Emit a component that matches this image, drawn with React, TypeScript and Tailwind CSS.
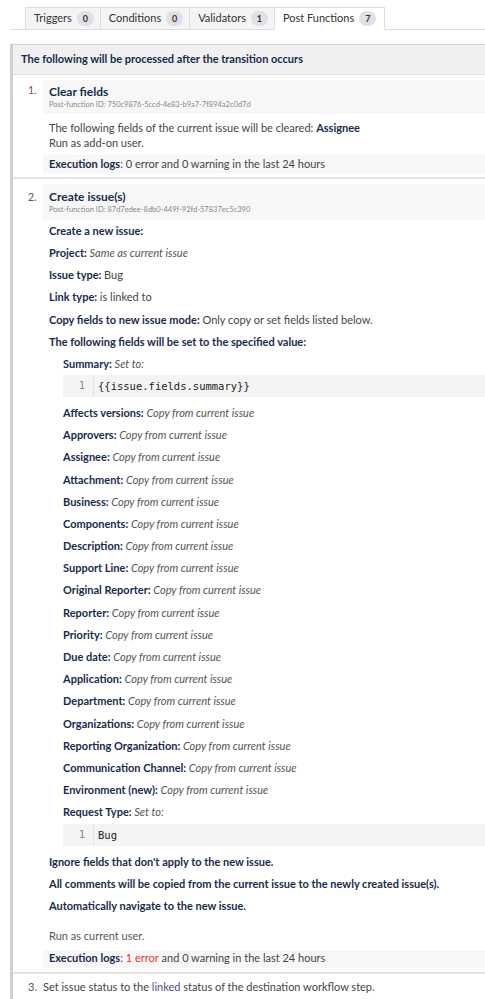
import React from 'react';

const tabs = [
  { label: 'Triggers', count: 0 },
  { label: 'Conditions', count: 0 },
  { label: 'Validators', count: 1 },
  { label: 'Post Functions', count: 7 },
];

const copied = [
  'Affects versions',
  'Approvers',
  'Assignee',
  'Attachment',
  'Business',
  'Components',
  'Description',
  'Support Line',
  'Original Reporter',
  'Reporter',
  'Priority',
  'Due date',
  'Application',
  'Department',
  'Organizations',
  'Reporting Organization',
  'Communication Channel',
  'Environment (new)',
];

const Code = ({ text }: { text: string }) => (
  <div className="flex h-[22px] items-center bg-[#f4f4f4] font-['DejaVu_Sans_Mono',monospace] text-[10.5px] text-[#222]">
    <span className="w-[30px] pr-[8px] text-right text-[#888]">1</span>
    <span className="h-full border-l border-[#e2e2e2] pl-[4px] leading-[22px]">{text}</span>
  </div>
);

const Line = ({ label, value, italic }: { label: string; value: string; italic?: boolean }) => (
  <div className="h-[22.2px] leading-[22px]">
    <span className="font-bold text-[#172b4d]">{label}: </span>
    <span className={italic ? 'italic text-[#555]' : 'text-[#444]'}>{value}</span>
  </div>
);

export default function App() {
  return (
    <div className="min-h-screen bg-white font-['Lato',sans-serif] text-[11px] text-[#333]">
      <div className="ml-[10px] flex border-b border-[#ddd] pt-[7px] pl-[15px]">
        {tabs.map((t, i) => {
          const active = i === tabs.length - 1;
          return (
            <div
              key={t.label}
              className={`-mb-px flex h-[23px] items-center gap-[5px] border border-[#ddd] pl-[8px] pr-[6px] text-[11px] ${
                active ? 'border-b-white bg-white pr-[8px]' : 'bg-[#f4f4f4]'
              } ${i > 0 ? '-ml-px' : ''}`}
            >
              <span className="text-[#333]">{t.label}</span>
              <span className="flex h-[15px] min-w-[17px] items-center justify-center rounded-full bg-[#e0e1e6] px-[5px] text-[9px] font-bold text-[#333]">
                {t.count}
              </span>
            </div>
          );
        })}
      </div>

      <div className="ml-[10px] mt-[14px] border-l-[3px] border-t border-[#d0d0d0]">
        <div className="flex h-[30px] items-center border-b border-[#ddd] bg-[#f0f0f0] pl-[8px] text-[11px] font-bold text-[#172b4d]">
          The following will be processed after the transition occurs
        </div>

        {/* 1 */}
        <div className="flex pt-[5px] pb-[4px]">
          <div className="w-[30px] pl-[15px] pt-[3px] text-[10.5px] text-[#8a3f6f]">1.</div>
          <div className="flex-1">
            <div className="bg-[#f7f7f7] pl-[6px] pt-[3px] pb-[4px]">
              <div className="text-[12px] font-bold leading-[17px] text-[#172b4d]">Clear fields</div>
              <div className="text-[7.5px] leading-[10px] text-[#888]">
                Post-function ID: 750c9876-5ccd-4e83-b9a7-7f894a2c0d7d
              </div>
            </div>
            <div className="pl-[6px] pt-[6px] pb-[5px] leading-[15px] text-[#444]">
              <div>
                The following fields of the current issue will be cleared:{' '}
                <span className="font-bold text-[#172b4d]">Assignee</span>
              </div>
              <div>Run as add-on user.</div>
            </div>
            <div className="flex h-[18px] items-center bg-[#f7f7f7] pl-[6px] text-[#444]">
              <span className="font-bold text-[#172b4d]">Execution logs</span>: 0 error and 0 warning in the last 24 hours
            </div>
          </div>
        </div>
        <div className="h-[2px] bg-[#e4e4e4]" />

        {/* 2 */}
        <div className="flex pt-[5px] pb-[4px]">
          <div className="w-[30px] pl-[15px] pt-[6px] text-[10.5px] text-[#555]">2.</div>
          <div className="flex-1">
            <div className="bg-[#f7f7f7] pl-[6px] pt-[4px] pb-[5px]">
              <div className="text-[12px] font-bold leading-[17px] text-[#172b4d]">Create issue(s)</div>
              <div className="text-[7.5px] leading-[10px] text-[#888]">
                Post-function ID: 87d7edee-8db0-449f-92fd-57837ec5c390
              </div>
            </div>
            <div className="pl-[6px]">
              <div className="h-[22px] font-bold leading-[22px] text-[#172b4d]">Create a new issue:</div>
              <Line label="Project" value="Same as current issue" italic />
              <Line label="Issue type" value="Bug" />
              <Line label="Link type" value="is linked to" />
              <Line label="Copy fields to new issue mode" value="Only copy or set fields listed below." />
              <div className="h-[22px] font-bold leading-[22px] text-[#172b4d]">
                The following fields will be set to the specified value:
              </div>
              <div className="pl-[14px]">
                <Line label="Summary" value="Set to:" italic />
                <Code text="{{issue.fields.summary}}" />
                <div className="pt-[5px]">
                  {copied.map((c) => (
                    <Line key={c} label={c} value="Copy from current issue" italic />
                  ))}
                  <Line label="Request Type" value="Set to:" italic />
                </div>
                <Code text="Bug" />
              </div>
              <div className="pt-[5px] font-bold text-[#172b4d]">
                <div className="h-[22px] leading-[22px]">Ignore fields that don't apply to the new issue.</div>
                <div className="h-[22px] whitespace-nowrap leading-[22px]">
                  All comments will be copied from the current issue to the newly created issue(s).
                </div>
                <div className="h-[22px] leading-[22px]">Automatically navigate to the new issue.</div>
              </div>
              <div className="h-[18px] pt-[11px] leading-[15px] text-[#555]">Run as current user.</div>
            </div>
            <div className="mt-[15px] flex h-[18px] items-center bg-[#f7f7f7] pl-[6px] text-[#444]">
              <span className="font-bold text-[#172b4d]">Execution logs</span>:&nbsp;
              <span className="text-[#e5352b]">1 error</span>&nbsp;and 0 warning in the last 24 hours
            </div>
          </div>
        </div>
        <div className="h-[2px] bg-[#e4e4e4]" />

        {/* 3 */}
        <div className="flex pt-[5px] pb-[6px]">
          <div className="w-[30px] pl-[15px] text-[11px] text-[#555]">3.</div>
          <div className="flex-1 text-[11px] text-[#444]">
            Set issue status to the <span className="text-[#5a4a8a]">linked</span> status of the destination workflow step.
          </div>
        </div>
      </div>
    </div>
  );
}
